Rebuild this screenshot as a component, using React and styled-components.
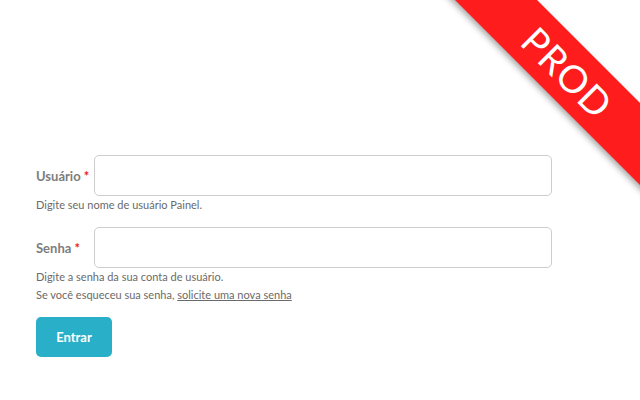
import React from "react";
import styled, { createGlobalStyle } from "styled-components";

const GlobalStyle = createGlobalStyle`
  html, body {
    margin: 0;
    padding: 0;
    background: #fff;
  }
  body {
    font-family: Lato, "Open Sans", sans-serif;
  }
`;

const App = () => {
  return (
    <>
      <GlobalStyle />
      <Page>
        <LoginForm>
          <Field>
            <Label>
              Usuário <Required>*</Required>
            </Label>
            <Input type="text" />
            <Help>Digite seu nome de usuário Painel.</Help>
          </Field>
          <Field>
            <Label>
              Senha <Required>*</Required>
            </Label>
            <Input type="password" />
            <Help>
              Digite a senha da sua conta de usuário.
              <br />
              Se você esqueceu sua senha, <HelpLink href="#">solicite uma nova senha</HelpLink>
            </Help>
          </Field>
          <Submit type="button">Entrar</Submit>
        </LoginForm>
        <Ribbon>PROD</Ribbon>
      </Page>
    </>
  );
};

const Page = styled.div`
  position: relative;
  box-sizing: border-box;
  width: 640px;
  height: 400px;
  overflow: hidden;
  padding: 155px 0 0 36px;
`;

const LoginForm = styled.form`
  display: flex;
  flex-direction: column;
  align-items: flex-start;
  width: 516px;
`;

const Field = styled.div`
  display: grid;
  grid-template-columns: 58px 1fr;
  align-items: center;
  width: 100%;
  margin-bottom: 13px;
`;

const Label = styled.label`
  font-size: 13px;
  font-weight: 700;
  color: #7d7d7d;
  white-space: nowrap;
`;

const Required = styled.span`
  color: #e8202a;
`;

const Input = styled.input`
  box-sizing: border-box;
  height: 41px;
  width: 100%;
  border: 1px solid #cdcdcd;
  border-radius: 5px;
  background: #fff;
  outline: none;
`;

const Help = styled.div`
  grid-column: 1 / -1;
  font-size: 11px;
  line-height: 18px;
  color: #6a6a6a;
`;

const HelpLink = styled.a`
  color: #6a6a6a;
  text-decoration: underline;
`;

const Submit = styled.button`
  width: 76px;
  height: 40px;
  border: none;
  border-radius: 5px;
  background: #29afc7;
  color: #fff;
  font-family: Lato, sans-serif;
  font-size: 13px;
  font-weight: 700;
  cursor: pointer;
`;

const Ribbon = styled.div`
  position: absolute;
  left: 418px;
  top: 43px;
  width: 300px;
  height: 58px;
  transform: rotate(45deg);
  background: #ff1c1c;
  box-shadow: 0 3px 6px rgba(0, 0, 0, 0.35);
  color: #fff;
  font-family: Lato, sans-serif;
  font-size: 38px;
  letter-spacing: 1px;
  line-height: 58px;
  text-align: center;
`;

export default App;
